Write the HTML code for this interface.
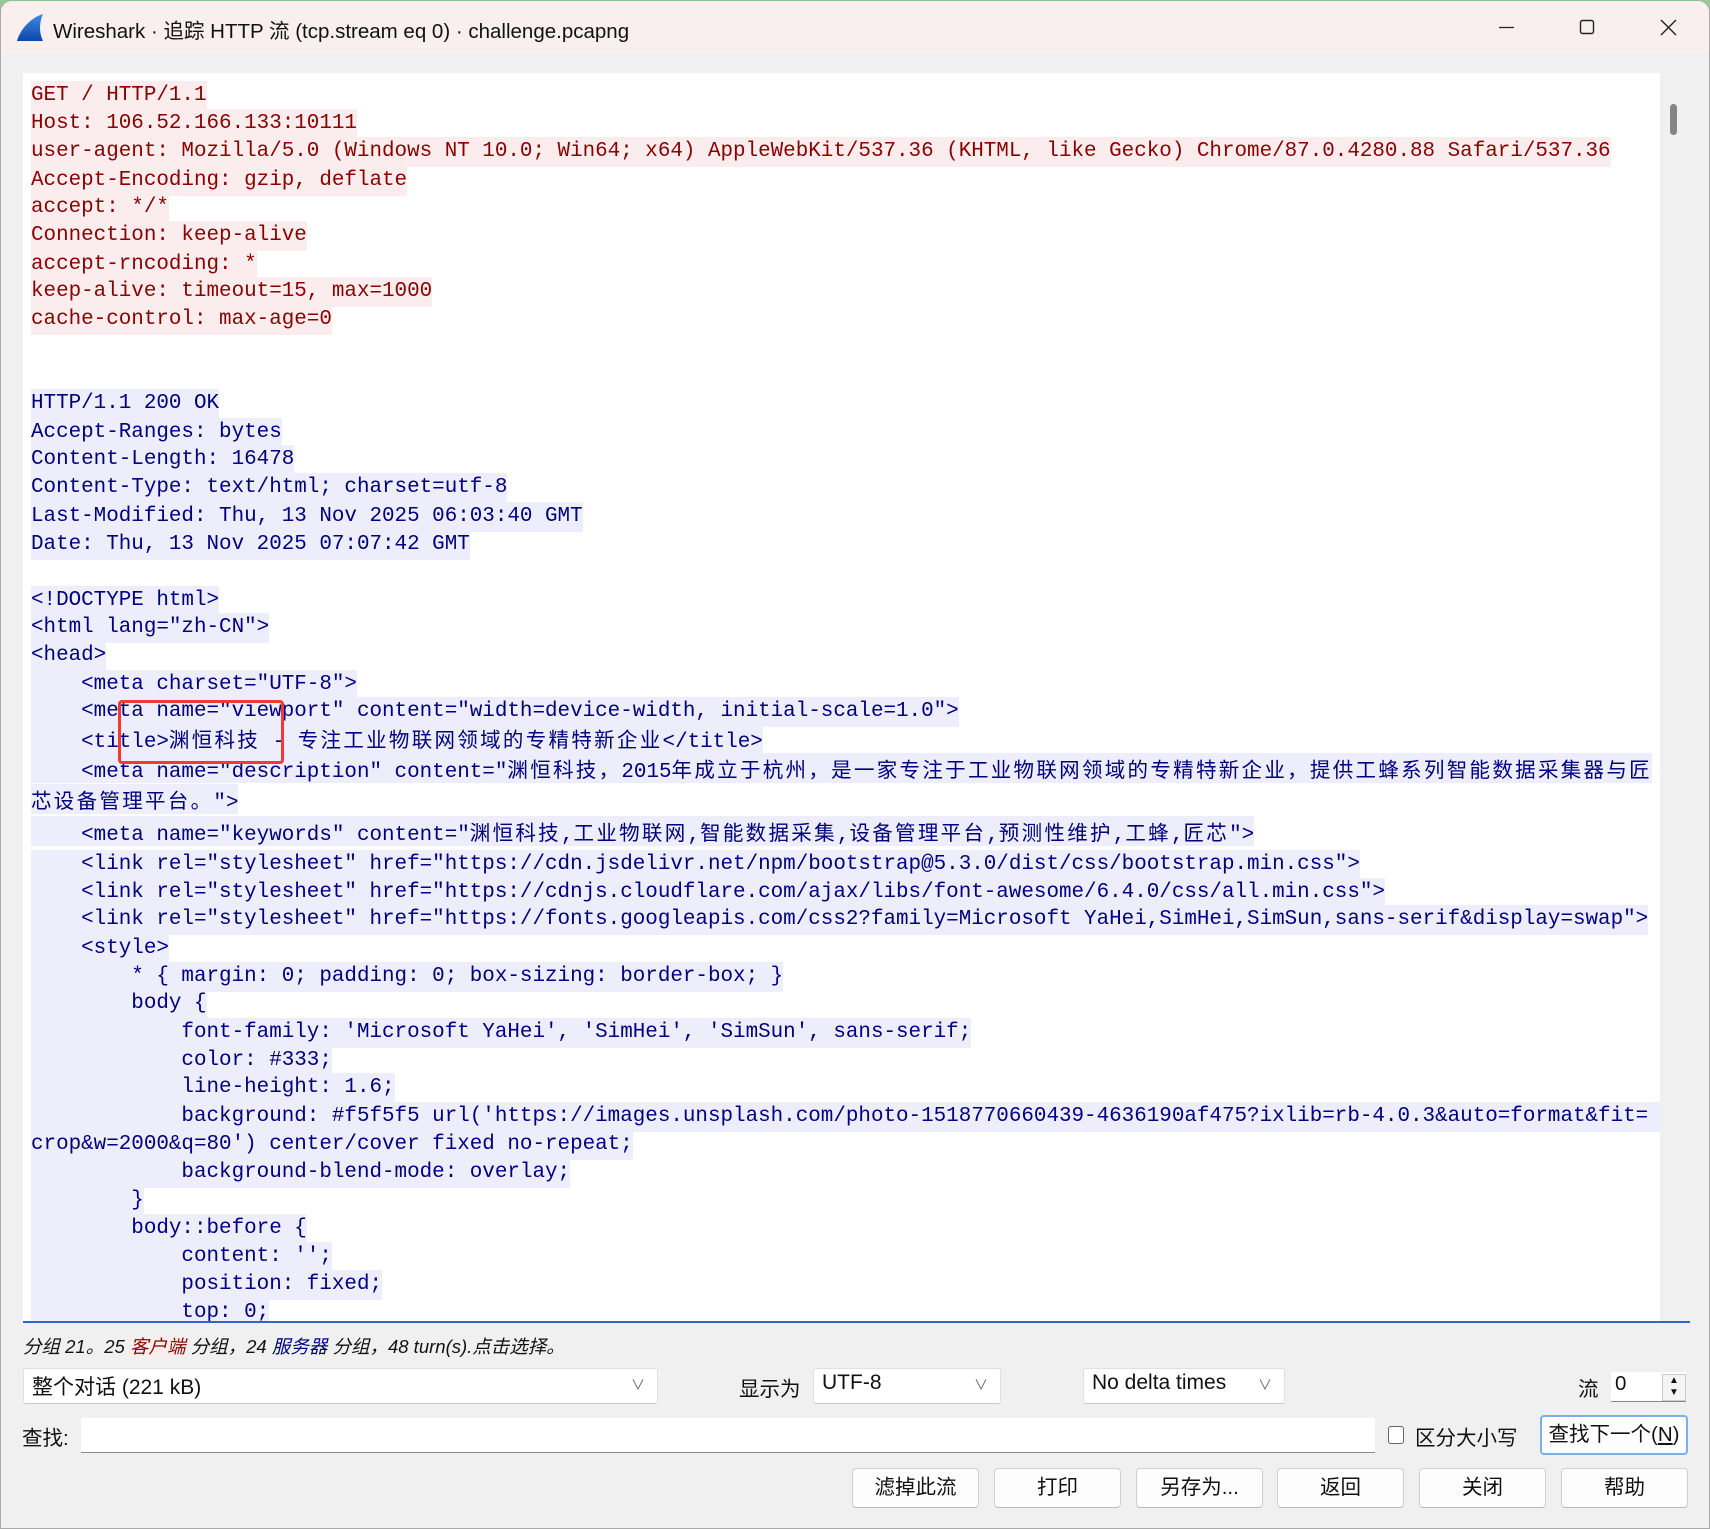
<!DOCTYPE html>
<html><head><meta charset="utf-8">
<style>
*{margin:0;padding:0;box-sizing:border-box}
html,body{width:1710px;height:1529px;overflow:hidden;background:#9cc79a}
#win{position:absolute;left:0;top:0;width:1710px;height:1529px;background:#f0f0f0;border-radius:12px 12px 0 0;overflow:hidden;border:1px solid #a9a9a9;border-top-color:#8fbf8c}
#title{position:absolute;left:0;top:0;width:100%;height:52px;background:#f8efee;font-family:"Liberation Sans","Noto Sans CJK SC",sans-serif;font-size:20.5px;color:#111}
#title .t{position:absolute;left:52px;top:13px}
#ta{position:absolute;left:22px;top:72px;width:1667px;height:1250px;background:#fff;border-bottom:2px solid #2a6bbd;overflow:hidden}
#sb{position:absolute;right:0;top:0;width:30px;height:100%;background:#f0f0f0}
#sb i{position:absolute;left:10px;top:31px;width:7px;height:31px;border-radius:4px;background:#858585}
.l{position:absolute;left:8px;height:30px;line-height:30px;font-family:"Liberation Mono","Noto Sans CJK SC",monospace;font-size:20.9px;white-space:pre}
.r{color:#8a0000;background:#fbeded}
.b{color:#00007f;background:#ededfb}
.c{font-family:"Noto Sans CJK SC",sans-serif;font-size:20.5px;letter-spacing:2.3px}
.ui{position:absolute;font-family:"Liberation Sans","Noto Sans CJK SC",sans-serif;font-size:20.5px;color:#111;white-space:nowrap}
.box{position:absolute;background:#fff;border:1px solid #e0e0e0;border-bottom-color:#c8c8c8;border-radius:3px}
.box span{position:absolute;left:8px;top:2px;font-family:"Liberation Sans","Noto Sans CJK SC",sans-serif;font-size:21px;color:#111}
.box .v{left:auto;right:12px;top:6px;font-size:14px;color:#666}
.btn{position:absolute;background:#fdfdfd;border:1px solid #d0d0d0;border-bottom-color:#b8b8b8;border-radius:4px;text-align:center;line-height:38px;font-family:"Liberation Sans","Noto Sans CJK SC",sans-serif;font-size:20.5px;color:#111}
</style></head><body>
<div id="win">
<div id="title">
<svg style="position:absolute;left:14px;top:12px" width="30" height="30" viewBox="0 0 30 30"><defs><linearGradient id="g" x1="0" y1="0" x2="0" y2="1"><stop offset="0" stop-color="#3d8be6"/><stop offset="1" stop-color="#1045a8"/></linearGradient></defs><path d="M28 1 C18 4 6 14 2 28 L28 28 C24 20 24 10 28 1Z" fill="url(#g)"/></svg>
<div class="t">Wireshark · 追踪 HTTP 流 (tcp.stream eq 0) · challenge.pcapng</div>
<svg style="position:absolute;left:1497px;top:18px" width="20" height="20"><path d="M1 8.5H16" stroke="#222" stroke-width="1.3"/></svg>
<svg style="position:absolute;left:1578px;top:17px" width="20" height="20"><rect x="1.5" y="2.5" width="13" height="13" rx="2" fill="none" stroke="#222" stroke-width="1.4"/></svg>
<svg style="position:absolute;left:1659px;top:17px" width="20" height="20"><path d="M1 2L16 17M16 2L1 17" stroke="#222" stroke-width="1.4"/></svg>
</div>
<div id="ta">
<div class="l r" style="top:8px">GET / HTTP/1.1</div>
<div class="l r" style="top:36px">Host: 106.52.166.133:10111</div>
<div class="l r" style="top:64px">user-agent: Mozilla/5.0 (Windows NT 10.0; Win64; x64) AppleWebKit/537.36 (KHTML, like Gecko) Chrome/87.0.4280.88 Safari/537.36</div>
<div class="l r" style="top:93px">Accept-Encoding: gzip, deflate</div>
<div class="l r" style="top:120px">accept: */*</div>
<div class="l r" style="top:148px">Connection: keep-alive</div>
<div class="l r" style="top:177px">accept-rncoding: *</div>
<div class="l r" style="top:204px">keep-alive: timeout=15, max=1000</div>
<div class="l r" style="top:232px">cache-control: max-age=0</div>
<div class="l b" style="top:316px">HTTP/1.1 200 OK</div>
<div class="l b" style="top:345px">Accept-Ranges: bytes</div>
<div class="l b" style="top:372px">Content-Length: 16478</div>
<div class="l b" style="top:400px">Content-Type: text/html; charset=utf-8</div>
<div class="l b" style="top:429px">Last-Modified: Thu, 13 Nov 2025 06:03:40 GMT</div>
<div class="l b" style="top:457px">Date: Thu, 13 Nov 2025 07:07:42 GMT</div>
<div class="l b" style="top:486px;height:28px;width:0"></div>
<div class="l b" style="top:513px">&lt;!DOCTYPE html&gt;</div>
<div class="l b" style="top:540px">&lt;html lang="zh-CN"&gt;</div>
<div class="l b" style="top:568px">&lt;head&gt;</div>
<div class="l b" style="top:597px">    &lt;meta charset="UTF-8"&gt;</div>
<div class="l b" style="top:624px">    &lt;meta name="viewport" content="width=device-width, initial-scale=1.0"&gt;</div>
<div class="l b" style="top:650px">    &lt;title&gt;<span class="c">渊恒科技</span> - <span class="c">专注工业物联网领域的专精特新企业</span>&lt;/title&gt;</div>
<div class="l b" style="top:680px">    &lt;meta name="description" content="<span class="c">渊恒科技，</span>2015<span class="c">年成立于杭州，是一家专注于工业物联网领域的专精特新企业，提供工蜂系列智能数据采集器与匠</span></div>
<div class="l b" style="top:711px"><span class="c">芯设备管理平台。</span>"&gt;</div>
<div class="l b" style="top:743px">    &lt;meta name="keywords" content="<span class="c">渊恒科技</span>,<span class="c">工业物联网</span>,<span class="c">智能数据采集</span>,<span class="c">设备管理平台</span>,<span class="c">预测性维护</span>,<span class="c">工蜂</span>,<span class="c">匠芯</span>"&gt;</div>
<div class="l b" style="top:777px">    &lt;link rel="stylesheet" href="https://cdn.jsdelivr.net/npm/bootstrap@5.3.0/dist/css/bootstrap.min.css"&gt;</div>
<div class="l b" style="top:805px">    &lt;link rel="stylesheet" href="https://cdnjs.cloudflare.com/ajax/libs/font-awesome/6.4.0/css/all.min.css"&gt;</div>
<div class="l b" style="top:832px">    &lt;link rel="stylesheet" href="https://fonts.googleapis.com/css2?family=Microsoft YaHei,SimHei,SimSun,sans-serif&amp;display=swap"&gt;</div>
<div class="l b" style="top:861px">    &lt;style&gt;</div>
<div class="l b" style="top:889px">        * { margin: 0; padding: 0; box-sizing: border-box; }</div>
<div class="l b" style="top:916px">        body {</div>
<div class="l b" style="top:945px">            font-family: 'Microsoft YaHei', 'SimHei', 'SimSun', sans-serif;</div>
<div class="l b" style="top:973px">            color: #333;</div>
<div class="l b" style="top:1000px">            line-height: 1.6;</div>
<div class="l b" style="top:1029px;width:1640px">            background: #f5f5f5 url('https://images.unsplash.com/photo-1518770660439-4636190af475?ixlib=rb-4.0.3&amp;auto=format&amp;fit=</div>
<div class="l b" style="top:1057px">crop&amp;w=2000&amp;q=80') center/cover fixed no-repeat;</div>
<div class="l b" style="top:1085px">            background-blend-mode: overlay;</div>
<div class="l b" style="top:1113px">        }</div>
<div class="l b" style="top:1141px">        body::before {</div>
<div class="l b" style="top:1169px">            content: '';</div>
<div class="l b" style="top:1197px">            position: fixed;</div>
<div class="l b" style="top:1225px">            top: 0;</div>
<div style="position:absolute;left:95px;top:627px;width:166px;height:64px;border:3.5px solid #f03a3a;border-radius:4px"></div>
<div id="sb"><i></i></div>
</div>
<div class="ui" style="left:22px;top:1332px;font-style:italic;font-size:18.5px">分组 21。25 <span style="color:#8a0000;background:#fbeded">客户端</span> 分组，24 <span style="color:#00007f">服务器</span> 分组，48 turn(s).点击选择。</div>
<div class="box" style="left:22px;top:1367px;width:635px;height:36px"><span>整个对话 (221 kB)</span><span class="v">∨</span></div>
<div class="ui" style="left:738px;top:1371px">显示为</div>
<div class="box" style="left:812px;top:1367px;width:188px;height:36px"><span>UTF-8</span><span class="v">∨</span></div>
<div class="box" style="left:1082px;top:1367px;width:202px;height:36px"><span>No delta times</span><span class="v">∨</span></div>
<div class="ui" style="left:1577px;top:1371px">流</div>
<div style="position:absolute;left:1610px;top:1371px;width:75px;height:30px;background:#fff;border-bottom:1px solid #888"></div>
<div class="ui" style="left:1614px;top:1371px">0</div>
<div style="position:absolute;left:1661px;top:1373px;width:24px;height:27px;background:#f4f4f4;border:1px solid #ccc;font-size:10px;line-height:12px;text-align:center;color:#111">▲<br>▼</div>
<div class="ui" style="left:21px;top:1420px">查找:</div>
<div style="position:absolute;left:80px;top:1417px;width:1294px;height:35px;background:#fff;border-bottom:1px solid #888"></div>
<div style="position:absolute;left:1387px;top:1425px;width:16px;height:18px;border:1px solid #666;border-radius:3px;background:#fff"></div>
<div class="ui" style="left:1414px;top:1420px">区分大小写</div>
<div class="btn" style="left:1539px;top:1414px;width:148px;height:40px;border:2px solid #7ab0e6;line-height:36px">查找下一个(<u>N</u>)</div>
<div class="btn" style="left:851px;top:1467px;width:127px;height:40px">滤掉此流</div>
<div class="btn" style="left:993px;top:1467px;width:127px;height:40px">打印</div>
<div class="btn" style="left:1135px;top:1467px;width:127px;height:40px">另存为...</div>
<div class="btn" style="left:1276px;top:1467px;width:127px;height:40px">返回</div>
<div class="btn" style="left:1418px;top:1467px;width:127px;height:40px">关闭</div>
<div class="btn" style="left:1560px;top:1467px;width:127px;height:40px">帮助</div>
</div>
</body></html>
